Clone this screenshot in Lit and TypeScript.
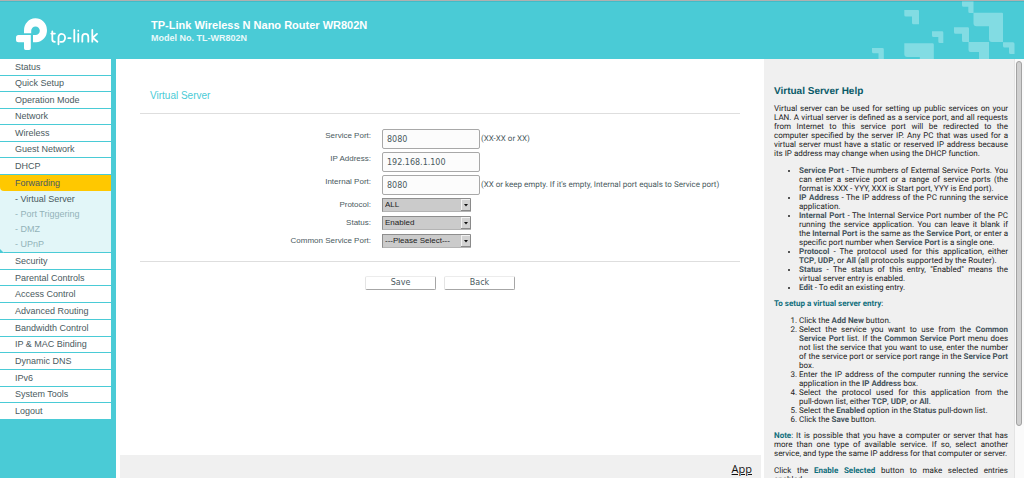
import { LitElement, html, css } from "lit";
import { customElement } from "lit/decorators.js";

const TOP_MENU = ["Status", "Quick Setup", "Operation Mode", "Network", "Wireless", "Guest Network", "DHCP", "Forwarding"];
const SUB_MENU = ["Virtual Server", "Port Triggering", "DMZ", "UPnP"];
const BOTTOM_MENU = [
  "Security", "Parental Controls", "Access Control", "Advanced Routing", "Bandwidth Control",
  "IP & MAC Binding", "Dynamic DNS", "IPv6", "System Tools", "Logout",
];

@customElement("page-header")
class PageHeader extends LitElement {
  static styles = css`
    :host { display: block; }
    header {
      display: flex; height: 59px; box-sizing: border-box; border-top: 1px solid #b0b0b0;
      background: #4acbd6; box-shadow: inset 0 1px #3fbcc8; color: #fff;
    }
    .logo { flex: none; width: 88px; height: 36px; padding: 16px 48px 0 15px; }
    .titles { flex: 1; padding-top: 17px; }
    h1 { margin: 0; font-size: 11px; line-height: 14px; }
    p { margin: 0; font-size: 9px; line-height: 12px; font-weight: bold; color: #e9f9fa; }
    .deco { flex: none; width: 184px; height: 58px; }
  `;
  render() {
    return html`<header>
      <svg class="logo" viewBox="15 17 88 36" role="img" aria-label="tp-link">
        <path fill="#fff" d="M24 33.200V30.500a11.500 12 0 1 1 12 11.800H33V35h2.500a4.300 4.300 0 1 0-4.300-4.300V33.200zM16 37.500q0-2.500 2.500-2.500H30.800V48.300q0 1.700-1.700 1.700H25.600q-1.600 0-1.600-1.700V42.300H18.500q-2.500 0-2.500-2.500z"/>
        <g fill="none" stroke="#fff" stroke-width="1.800" stroke-linecap="round">
          <path d="M52.300 31.500V39.500q0 2.300 2.600 2.300M51.300 33.600h3.600"/>
          <path d="M58.500 44.300V37.500a3 3.700 0 0 1 3.300-3.700a3.300 4 0 0 1 0 8H60.500"/>
          <path d="M68.300 38.200h2.300"/>
          <path d="M74.300 30V41.700"/>
          <path d="M78.300 34V41.700M78.300 30.700v.1"/>
          <path d="M82.300 41.700V37q0-3.200 3-3.200t3 3.200v4.700"/>
          <path d="M92.300 30V41.700M97 33.900l-4.300 3.900 4.700 3.900"/>
        </g>
      </svg>
      <div class="titles">
        <h1>TP-Link Wireless N Nano Router WR802N</h1>
        <p>Model No. TL-WR802N</p>
      </div>
      <svg class="deco" viewBox="840 1 184 58" aria-hidden="true">
        <g fill="#82dce3">
          <path d="M904.300 10H918q1 0 1 1V24.300h-5.500q-1.500 0-1.500-1.500V16.500h-6.200q-1.500 0-1.500-1.500z"/>
          <path d="M932 31.300H942q1.300 0 1.300 1.300V43h-3.500q-1.500 0-1.500-1.500V37h-4.800q-1.500 0-1.500-1.500z"/>
          <path d="M872 48H882.500q1.300 0 1.300 1.300V59H878.500V53.300H873.500q-1.500 0-1.500-1.500z"/>
          <path d="M904.300 43.300H932.500q1.300 0 1.300 1.300V59H919.800V57H907.300q-3 0-3-3z"/>
          <path d="M962 1.500H973.500V13h-3.700q-1.500 0-1.500-1.500V6.700H963.500q-1.500 0-1.500-1.500z"/>
          <path d="M973.500 12.700H1002q1 0 1 1V42h-11q-3 0-3-3V26.300H976.500q-3 0-3-3z"/>
          <path d="M954 27.300H967.700q1.300 0 1.300 1.300V42h-5.500q-1.500 0-1.500-1.500V33.800h-6.500q-1.500 0-1.500-1.500z"/>
          <path d="M968.500 42H989V59H979V52H970.500q-2 0-2-2z"/>
          <path d="M1003 42.300H1013q1.500 0 1.500 1.500V54h-4q-1.500 0-1.500-1.500V47.500h-4.500q-1.500 0-1.500-1.500z"/>
        </g>
      </svg>
    </header>`;
  }
}

@customElement("side-menu")
class SideMenu extends LitElement {
  static properties = { current: { type: String } };
  declare current: string;
  constructor() {
    super();
    this.current = "Virtual Server";
  }
  static styles = css`
    :host { display: block; background: #4acbd6; padding-right: 5px; }
    ul { margin: 0; padding: 0; list-style: none; display: grid; grid-auto-rows: 1fr; }
    .upper { height: 132px; }
    .lower { height: 167px; }
    .item { display: flex; border-bottom: 1px solid #4acbd6; background: #fff; }
    .item.active { background: #ffc800; border-bottom: 0; border-bottom-left-radius: 4px; }
    .active-row { display: grid; background: #e2f6f8; }
    a { flex: 1; align-self: center; padding-left: 15px; font-size: 9px; line-height: 12px; color: #4a5a60; text-decoration: none; }
    .sub {
      height: 61px; background: #e2f6f8; border-bottom: 1px solid #4acbd6;
      clip-path: polygon(0 0, 100% 0, 100% 100%, 4px 100%, 0 calc(100% - 4px));
    }
    .sub li { display: flex; }
    .sub a { color: #93b3b9; }
    .sub a.current { color: #4a5a60; }
  `;
  private entries(items: string[]) {
    return items.map((t) =>
      t === "Forwarding"
        ? html`<li class="active-row"><div class="item active"><a href="#">${t}</a></div></li>`
        : html`<li class="item"><a href="#">${t}</a></li>`);
  }
  render() {
    return html`<nav aria-label="Main">
      <ul class="upper">${this.entries(TOP_MENU)}</ul>
      <ul class="sub">${SUB_MENU.map((t) => html`<li><a href="#" class=${t === this.current ? "current" : ""}>- ${t}</a></li>`)}</ul>
      <ul class="lower">${this.entries(BOTTOM_MENU)}</ul>
    </nav>`;
  }
}

@customElement("server-form")
class ServerForm extends LitElement {
  static styles = css`
    :host { display: flex; flex-direction: column; min-width: 0; min-height: 0; color: #4a5a60; font-size: 8px; }
    form { flex: 1; padding: 30px 24px 0; }
    h2 { margin: 0; padding: 0 10px 10px; font-size: 10px; line-height: 14px; font-weight: normal; color: #4acbd6; }
    .fields { display: grid; grid-template-columns: 231px 1fr; column-gap: 11px; border: solid #dedede; border-width: 1px 0; padding: 15px 0 9px; }
    .fields > label { text-align: right; line-height: 13px; }
    .cell { display: flex; align-items: center; gap: 1px; line-height: 12px; }
    .tall { height: 23px; align-items: flex-start; }
    .tall span { line-height: 20px; font-family: Roboto, sans-serif; text-rendering: geometricPrecision; }
    .short { height: 18px; align-items: flex-start; }
    input {
      box-sizing: border-box; width: 98px; height: 20px; margin: 0; padding: 0 4px; border: 1px solid #a8a8a8; border-radius: 2px;
      font: 8px "DejaVu Sans", sans-serif; color: #4a5a60; background: #fcfcfc; text-rendering: inherit;
    }
    .pick { position: relative; width: 89px; height: 14px; }
    select {
      appearance: none; box-sizing: border-box; display: block; width: 100%; height: 14px; margin: 0; padding: 0 12px 0 2px;
      border: 1px solid #b4b4b4; border-top-color: #8e8e8e; border-left-color: #8e8e8e; border-radius: 0; background: #cbcbcb;
      font: 8px/12px "Liberation Sans", Arial, sans-serif; color: #222; text-rendering: inherit;
    }
    .pick svg { position: absolute; right: 0; top: 1px; width: 10px; height: 12px; pointer-events: none; }
    .actions { display: flex; justify-content: center; gap: 8px; padding: 14px 0 0; }
    button {
      box-sizing: border-box; width: 71px; height: 14px; margin: 0; padding: 0; border: 1px solid #a6a6a6; border-top-color: #ececec; border-left-color: #e4e4e4;
      border-radius: 2px; background: #fff; font: 8px/10px "DejaVu Sans", sans-serif; color: #4a5a60; text-rendering: inherit;
    }
    footer { height: 23px; margin: 0 3px 0 4px; padding-right: 9px; background: #f0f0f0; text-align: right; }
    footer a { font: 11px/28px "Open Sans", sans-serif; color: #111; }
  `;
  private picker(id: string, label: string, value: string) {
    return html`<label for=${id}>${label}</label>
      <div class="cell short"><div class="pick">
        <select id=${id}><option>${value}</option></select>
        <svg viewBox="0 0 10 12" aria-hidden="true">
          <path d="M0 0h10v12H0z" fill="#8a8a8a"/><path d="M0 0h9v11H0z" fill="#f2f2f2"/><path d="M1 1h8v10H1z" fill="#d2d2d2"/>
          <path d="M3 5h4L5 7.500z" fill="#111"/>
        </svg>
      </div></div>`;
  }
  private field(id: string, label: string, value: string, hint = "") {
    return html`<label for=${id}>${label}</label>
      <div class="cell tall"><input id=${id} type="text" .value=${value}><span>${hint}</span></div>`;
  }
  render() {
    return html`<form @submit=${(e: Event) => e.preventDefault()}>
        <h2>Virtual Server</h2>
        <div class="fields">
          ${this.field("service", "Service Port:", "8080", "(XX-XX or XX)")}
          ${this.field("ip", "IP Address:", "192.168.1.100")}
          ${this.field("internal", "Internal Port:", "8080", "(XX or keep empty. If it's empty, Internal port equals to Service port)")}
          ${this.picker("protocol", "Protocol:", "ALL")}
          ${this.picker("status", "Status:", "Enabled")}
          ${this.picker("common", "Common Service Port:", "---Please Select---")}
        </div>
        <div class="actions"><button type="submit">Save</button><button type="button">Back</button></div>
      </form>
      <footer><a href="#">App</a></footer>`;
  }
}

@customElement("help-panel")
class HelpPanel extends LitElement {
  static styles = css`
    :host { display: grid; grid-template-columns: 1fr 10px; grid-template-rows: minmax(0, 1fr); min-height: 0; overflow: hidden; background: #f0f0f0; }
    .text {
      min-height: 0; overflow: hidden; padding: 26px 6px 0 10px; font-family: Roboto, sans-serif; font-size: 8px; line-height: 9px;
      color: #222; text-align: justify; text-rendering: geometricPrecision;
    }
    h2 { margin: 0 0 5px; font-family: "Liberation Sans", Arial, sans-serif; font-size: 10px; line-height: 14px; color: #0a5a68; text-align: left; }
    p { margin: 0 0 8px; }
    ul, ol { margin: 0 0 7px; padding-left: 25px; }
    b { color: #44545c; }
    .key { color: #0f6e7c; }
    .whole { white-space: nowrap; }
    .track { background: #fafafa; border-left: 1px solid #e4e4e4; padding: 2px 1px; }
    .thumb { box-sizing: border-box; width: 6px; height: 88%; border: 1px solid #a2a2a2; border-radius: 3px; background: #d0d0d0; }
  `;
  render() {
    return html`<aside class="text">
        <h2>Virtual Server Help</h2>
        <p>Virtual server can be used for setting up public services on your LAN. A virtual server is defined as a service port, and all requests from Internet to this service port will be redirected to the computer specified by the server IP. Any PC that was used for a virtual server must have a static or reserved IP address because its IP address may change when using the DHCP function.</p>
        <ul>
          <li><b>Service Port</b> - The numbers of External Service Ports. You can enter a service port or a range of service ports (the format is XXX - YYY, XXX is Start port, YYY is End port).</li>
          <li><b>IP Address</b> - The IP address of the PC running the service application.</li>
          <li><b>Internal Port</b> - The Internal Service Port number of the PC running the service application. You can leave it blank if the <b>Internal Port</b> is the same as the <b>Service Port</b>, or enter a specific port number when <b>Service Port</b> is a single one.</li>
          <li><b>Protocol</b> - The protocol used for this application, either <b>TCP</b>, <b>UDP</b>, or <b>All</b> (all protocols supported by the Router).</li>
          <li><b>Status</b> - The status of this entry, "Enabled" means the virtual server entry is enabled.</li>
          <li><b>Edit</b> - To edit an existing entry.</li>
        </ul>
        <p><b class="key">To setup a virtual server entry</b>:</p>
        <ol>
          <li>Click the <b>Add New</b> button.</li>
          <li>Select the service you want to use from the <b>Common Service Port</b> list. If the <b>Common Service Port</b> menu does not list the service that you want to use, enter the number of the service port or service port range in the <b>Service Port</b> box.</li>
          <li>Enter the IP address of the computer running the service application in the <b>IP Address</b> box.</li>
          <li>Select the protocol used for this application from the <span class="whole">pull-down</span> list, either <b>TCP</b>, <b>UDP</b>, or <b>All</b>.</li>
          <li>Select the <b>Enabled</b> option in the <b>Status</b> <span class="whole">pull-down</span> list.</li>
          <li>Click the <b>Save</b> button.</li>
        </ol>
        <p><b class="key">Note</b>: It is possible that you have a computer or server that has more than one type of available service. If so, select another service, and type the same IP address for that computer or server.</p>
        <p>Click the <b class="key">Enable Selected</b> button to make selected entries enabled.</p>
      </aside>
      <div class="track"><div class="thumb"></div></div>`;
  }
}

@customElement("app-root")
class AppRoot extends LitElement {
  static styles = css`
    :host {
      display: flex; flex-direction: column; height: 100vh; overflow: hidden; background: #fff;
      font-family: "Liberation Sans", Arial, sans-serif;
    }
    main { flex: 1; min-height: 0; display: grid; grid-template-columns: 116px minmax(0, 1fr) 260px; grid-template-rows: minmax(0, 1fr); }
  `;
  render() {
    return html`<page-header></page-header>
      <main><side-menu></side-menu><server-form></server-form><help-panel></help-panel></main>`;
  }
}
